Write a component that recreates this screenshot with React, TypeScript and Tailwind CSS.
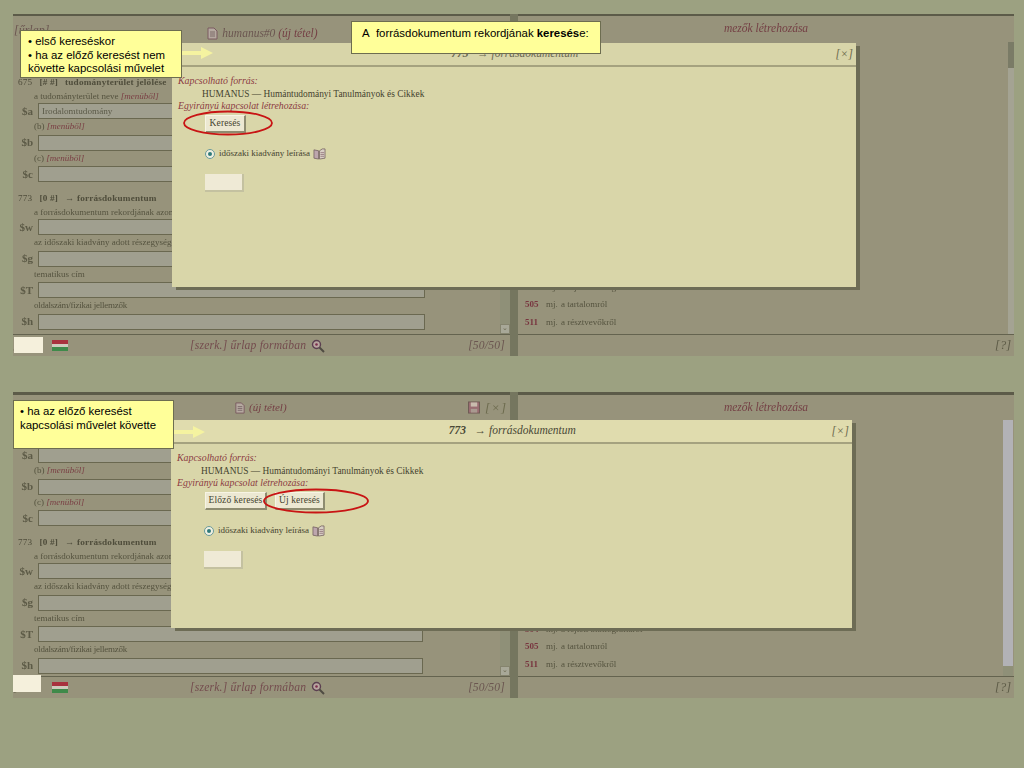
import React from "react";

const serif = "font-['Liberation_Serif',serif]";

function DocIcon({ className = "" }: { className?: string }) {
  return (
    <svg viewBox="0 0 13 13" className={className}>
      <path d="M2 1h6l3 3v8H2z" fill="#b5a9a0" stroke="#7a5a60" strokeWidth="1" />
      <path d="M4 5h5M4 7h5M4 9h5" stroke="#6e5a5c" strokeWidth="0.8" />
    </svg>
  );
}
function BookIcon() {
  return (
    <svg viewBox="0 0 14 13" className="w-[13px] h-[12px]">
      <path d="M1 2l5 1v9l-5-1z" fill="#bda6ad" stroke="#6e5a5c" strokeWidth="0.8" />
      <path d="M7 3l3-2h3v10l-6 1z" fill="#d8cfc4" stroke="#6e5a5c" strokeWidth="0.8" />
      <path d="M8 5h4M8 7h4M8 9h4" stroke="#8c6a74" strokeWidth="0.8" />
    </svg>
  );
}
function SaveIcon() {
  return (
    <svg viewBox="0 0 13 13" className="w-[12px] h-[13px]">
      <rect x="0.5" y="0.5" width="12" height="12" fill="#9a6d72" stroke="#6e5a54" />
      <rect x="3" y="1" width="7" height="4.5" fill="#c9bcae" />
      <rect x="3" y="8" width="7" height="4" fill="#a99a90" />
    </svg>
  );
}
function LensIcon() {
  return (
    <svg viewBox="0 0 14 14" className="w-[14px] h-[14px]">
      <circle cx="5.5" cy="5.5" r="4" fill="#b9a6a0" stroke="#5b3f50" strokeWidth="1.4" />
      <circle cx="5.5" cy="5.5" r="1.3" fill="#7c2f4e" />
      <path d="M8.5 8.5L13 13" stroke="#4f4b42" strokeWidth="2" />
    </svg>
  );
}
function Flag() {
  return (
    <div className="w-4 h-[11px] flex flex-col">
      <div className="flex-1 bg-[#a8323e]" />
      <div className="flex-1 bg-[#cfcbbd]" />
      <div className="flex-1 bg-[#3f8a4a]" />
    </div>
  );
}

function Hint({ children, tight }: { children: React.ReactNode; tight?: boolean }) {
  return (
    <div className={`h-[15.5px] pl-[21px] text-[9px] leading-[15px] text-[#55533f] whitespace-nowrap ${tight ? "tracking-[-0.25px]" : ""}`}>{children}</div>
  );
}
function Field({ label, value, width }: { label: string; value?: string; width: number }) {
  return (
    <div className="flex items-center h-4">
      <div className="w-[20px] text-right text-[11px] font-bold text-[#5c5a46] shrink-0">{label}</div>
      <div
        className="ml-[5px] h-4 border border-[#6a6850] bg-[#a09f8f] text-[9.2px] leading-[14px] pl-[3px] text-[#5b5a48]"
        style={{ width }}
      >
        {value}
      </div>
    </div>
  );
}
function Menu({ letter }: { letter: string }) {
  return (
    <Hint>
      ({letter}) <i className="text-[#7a3f44]">[menüből]</i>
    </Hint>
  );
}
function Title({ tag, flag, text, mt = "" }: { tag: string; flag: string; text: string; mt?: string }) {
  return (
    <div className={`h-[14px] ${mt} pl-[5px] flex items-center gap-[7px] text-[9.2px] tracking-[0.2px] text-[#4f4d3b] whitespace-nowrap`}>
      <span>{tag}</span>
      <b>{flag}</b>
      <b>{text}</b>
    </div>
  );
}

function RightRow({ num, text }: { num: string; text: string }) {
  return (
    <div className="h-[17.3px] flex items-center text-[9px] text-[#55533f] pl-[7px] whitespace-nowrap">
      <b className="w-[21px] text-[#78353f]">{num}</b>
      <span className="mr-[1px]">mj.</span>
      <span>&nbsp;{text}</span>
    </div>
  );
}

function Button({ children, width }: { children: React.ReactNode; width: string }) {
  return (
    <div className={`h-[18px] ${width} bg-[#ece8d2] border-r-2 border-b-2 border-[#8e8c70] border-t border-l border-t-[#f7f4e4] border-l-[#f7f4e4] text-[9.5px] leading-[15px] text-[#45432f] tracking-[0.1px] text-center whitespace-nowrap`}>
      {children}
    </div>
  );
}

function Dialog({
  frame,
  bright,
  children,
}: {
  frame: string;
  bright?: boolean;
  children: React.ReactNode;
}) {
  return (
    <div className={`absolute ${frame} bg-[#d9d6a9] shadow-[4px_3px_0_#6d6c55] flex flex-col`}>
      <div className={`h-6 shrink-0 border-b-2 border-[#a5a27f] flex items-center text-[#4a4936] text-[11.5px] italic ${bright ? "bg-[#e0dcae]" : "bg-[#d8d5a9]"}`}>
        <div className="flex-1 flex justify-center pl-[22px]">
          <span className={bright ? "" : "text-[#6a6850]"}>
            <b>773</b> &nbsp; → forrásdokumentum
          </span>
        </div>
        <span className="pr-[3px] text-[12px] text-[#6d6b4e]">[×]</span>
      </div>
      <div className="flex-1 pl-[6px] pt-[8px] text-[10px] leading-[12.6px] text-[#45432f]">
        <div className="italic text-[#8b3b42] text-[9.9px]">Kapcsolható forrás:</div>
        <div className="pl-[24px] text-[9.4px]">HUMANUS — Humántudományi Tanulmányok és Cikkek</div>
        <div className="italic text-[#8b3b42] text-[9.8px]">Egyirányú kapcsolat létrehozása:</div>
        {children}
        <div className="pl-[27px] mt-[13px] flex items-center gap-[3px] h-[16px]">
          <span className="w-[10px] h-[10px] rounded-full border border-[#6a9a9a] bg-[#f0efe0] flex items-center justify-center">
            <span className="w-[4px] h-[4px] rounded-full bg-[#2f7a7a]" />
          </span>
          <span className="text-[9px] ml-[1px]">időszaki kiadvány leírása</span>
          <BookIcon />
        </div>
        <div className="ml-[27px] mt-[12px] w-[39px] h-[18px] bg-[#efead6] border-r-2 border-b-2 border-[#c4c1a0]" />
      </div>
    </div>
  );
}

function Panel({
  height,
  mt,
  topBorder,
  header,
  inputWidth,
  scrollbar,
  value,
  overlay,
  whiteBox,
  showFirst,
}: {
  height: string;
  mt: string;
  topBorder: string;
  header: React.ReactNode;
  inputWidth: number;
  scrollbar: React.ReactNode;
  value?: string;
  overlay: React.ReactNode;
  whiteBox: string;
  showFirst?: boolean;
}) {
  return (
    <div className={`relative ${height} ${mt} w-[1001px] flex bg-[#75765f] ${serif}`}>
      <div className={`w-[497px] flex flex-col bg-[#97937b] ${topBorder} border-[#5c5b49] blur-[0.35px]`}>
        {header}
        <div className="flex-1 min-h-0 overflow-hidden relative">
          {showFirst ? (
            <>
              <Title tag="675" flag="[# #]" text="tudományterület jelölése" />
              <div className="h-[13px] pl-[21px] text-[9px] leading-[13px] text-[#55533f] whitespace-nowrap">
                a tudományterület neve <i className="text-[#7a3f44]">[menüből]</i>
              </div>
            </>
          ) : (
            <div className="h-[27px]" />
          )}
          <Field label="$a" value={value} width={inputWidth} />
          <Menu letter="b" />
          <Field label="$b" width={inputWidth} />
          <Menu letter="c" />
          <Field label="$c" width={inputWidth} />
          <Title tag="773" flag="[0 #]" text="→ forrásdokumentum" mt="mt-[10px]" />
          <div className="h-[13px] pl-[21px] text-[9px] leading-[13px] text-[#55533f] whitespace-nowrap">
            a forrásdokumentum rekordjának azonosítója
          </div>
          <Field label="$w" width={inputWidth} />
          <Hint>az időszaki kiadvány adott részegységének adatai</Hint>
          <Field label="$g" width={inputWidth} />
          <Hint>tematikus cím</Hint>
          <Field label="$T" width={inputWidth} />
          <Hint tight>oldalszám/fizikai jellemzők</Hint>
          <Field label="$h" width={inputWidth} />
          <div className="absolute right-0 bottom-0 top-0 w-[10px] flex flex-col justify-end bg-[#8f9078]">
            <div className="h-[10px] bg-[#a8a898] border border-[#85846e] text-[7px] leading-[7px] text-center text-[#6a6850]">⌄</div>
          </div>
        </div>
        <div className="h-[22px] shrink-0 border-t border-[#64634f] flex items-center text-[11.6px] italic text-[#6b5650] tracking-[0.2px] relative">
          <span className="w-[39px] text-[#55533f] whitespace-nowrap">[&nbsp;&nbsp;&nbsp;&nbsp;&nbsp;&nbsp;&nbsp;&nbsp;&nbsp;&nbsp;&nbsp;&nbsp;]</span>
          <Flag />
          <span className="ml-[122px] text-[#744c4e]">[szerk.] űrlap formában</span>
          <span className="ml-[5px] not-italic"><LensIcon /></span>
          <span className="ml-auto pr-[5px]">[50/50]</span>
        </div>
      </div>
      <div className="w-[496px] ml-auto flex flex-col bg-[#97937b] relative blur-[0.35px]">
        <div className={`h-[28px] shrink-0 ${topBorder} border-[#5c5b49] flex items-center justify-center italic text-[11.5px] text-[#743f44]`}>
          mezők létrehozása
        </div>
        <div className="flex-1 min-h-0 flex flex-col justify-end pb-[3px]">
          <RightRow num="504" text="a rejtett bibliográfiáról" />
          <RightRow num="505" text="a tartalomról" />
          <RightRow num="511" text="a résztvevőkről" />
        </div>
        {scrollbar}
        <div className="h-[22px] shrink-0 border-t border-[#64634f] flex items-center justify-end pr-[3px] italic text-[12.5px] text-[#5d5b47]">[?]</div>
      </div>
      {overlay}
      <div className={`absolute ${whiteBox} bg-[#f5f0dc]`} />
    </div>
  );
}

function Callout({ frame, children }: { frame: string; children: React.ReactNode }) {
  return (
    <div className={`absolute ${frame} bg-[#ffff99] border border-[#6d6d50] font-['Liberation_Sans',sans-serif] text-[11.4px] leading-[13.7px] text-black`}>
      {children}
    </div>
  );
}

function Arrow({ className }: { className: string }) {
  return (
    <svg viewBox="0 0 32 12" className={`absolute w-[32px] h-[12px] ${className}`}>
      <path d="M0 4h20V0l12 6-12 6V8H0z" fill="#f5f3a0" />
    </svg>
  );
}

export default function App() {
  return (
    <div className="relative w-[1024px] h-[768px] overflow-hidden bg-[#9ca181] pl-[13px] pt-[14px]">
      <Panel
        height="h-[342px]"
        mt=""
        topBorder="border-t-2"
        inputWidth={387}
        value="Irodalomtudomány"
        showFirst
        whiteBox="left-[1px] top-[323px] w-[29px] h-[16px]"
        header={
          <div className="h-[60px] shrink-0 flex items-start pt-[5px] text-[12px] italic text-[#6b5650]">
            <span className="pl-[1px]">[űrlap]</span>
            <span className="ml-[157px] mt-[4px] flex items-center gap-[3px]">
              <DocIcon className="w-[13px] h-[13px]" />
              <span className="text-[11.5px]">humanus#0 <span className="text-[#743f44]">(új tétel)</span></span>
            </span>
          </div>
        }
        scrollbar={
          <div className="absolute right-0 top-[28px] bottom-[22px] w-[6px] bg-[#a4a393] flex flex-col">
            <div className="h-[26px] bg-[#7a7b66]" />
          </div>
        }
        overlay={
          <Dialog frame="left-[159px] top-[29px] w-[684px] h-[244px]">
            <div className="ml-[27px] mt-[2px] w-fit">
              <Button width="w-[41px]">Keresés</Button>
            </div>
          </Dialog>
        }
      />
      <Panel
        height="h-[306px]"
        mt="mt-[36px]"
        topBorder="border-t-[3px]"
        inputWidth={385}
        whiteBox="left-0 top-[283px] w-[28px] h-[17px]"
        header={
          <div className="h-[25px] shrink-0 flex items-center text-[12px] italic text-[#6b5650]">
            <span className="ml-[221px] flex items-center gap-[3px] text-[11px]">
              <DocIcon className="w-[12px] h-[12px]" />
              <span className="text-[#743f44]">(új tétel)</span>
            </span>
            <span className="ml-auto flex items-center gap-[5px] pr-[3px]">
              <SaveIcon />
              <span className="text-[#6d6b4e] text-[13px] tracking-[1px]">[×]</span>
            </span>
          </div>
        }
        scrollbar={
          <div className="absolute right-[1px] top-[28px] bottom-[22px] w-[10px] bg-[#b2b2b6] flex flex-col justify-end">
            <div className="h-[10px] bg-[#8f9078]" />
          </div>
        }
        overlay={
          <Dialog frame="left-[158px] top-[28px] w-[681px] h-[208px]" bright>
            <div className="ml-[28px] mt-[2px] flex gap-[8px]">
              <Button width="w-[62px]">Előző keresés</Button>
              <Button width="w-[50px]">Új keresés</Button>
            </div>
          </Dialog>
        }
      />

      <svg className="absolute left-[178px] top-[108px] w-[100px] h-[30px]" viewBox="0 0 100 30">
        <ellipse cx="50" cy="15" rx="44" ry="11.5" fill="none" stroke="#c81414" strokeWidth="1.8" />
      </svg>
      <svg className="absolute left-[258px] top-[486px] w-[114px] h-[30px]" viewBox="0 0 114 30">
        <ellipse cx="58" cy="15" rx="52" ry="11.5" fill="none" stroke="#c81414" strokeWidth="1.8" />
      </svg>

      <Arrow className="left-[181px] top-[47px]" />
      <Arrow className="left-[173px] top-[426px]" />

      <Callout frame="left-[20px] top-[30px] w-[162px] h-[48px] pl-[7px] pt-[4px]">
        <div>• első kereséskor</div>
        <div>• ha az előző keresést nem</div>
        <div>követte kapcsolási művelet</div>
      </Callout>
      <Callout frame="left-[351px] top-[21px] w-[250px] h-[33px] pl-[10px] pt-[5px]">
        A&nbsp; forrásdokumentum rekordjának <b>keresés</b>e:
      </Callout>
      <Callout frame="left-[13px] top-[400px] w-[161px] h-[49px] pl-[6px] pt-[4px]">
        <div>• ha az előző keresést</div>
        <div>kapcsolási művelet követte</div>
      </Callout>
    </div>
  );
}
